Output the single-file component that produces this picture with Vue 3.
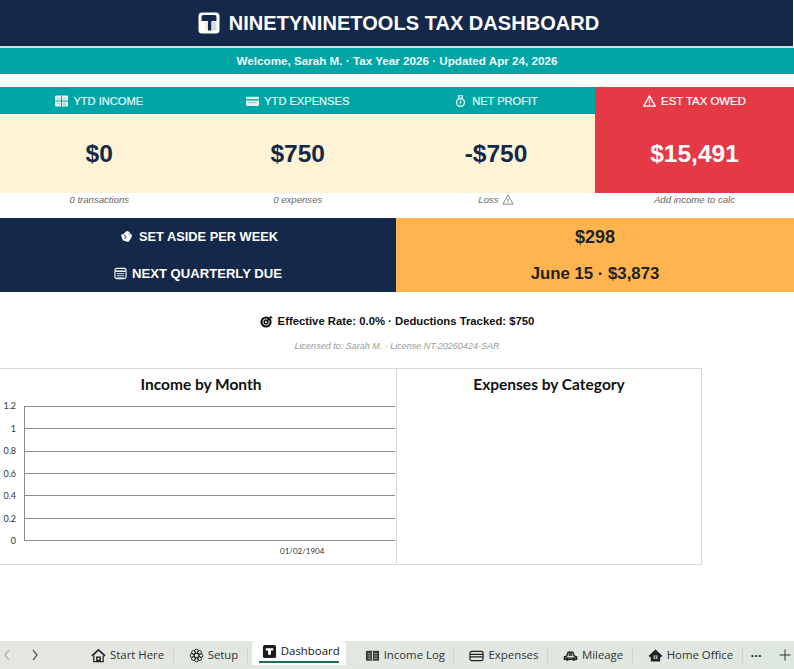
<script setup>
const kpis = [
  { label: 'YTD INCOME', value: '$0', note: '0 transactions', icon: 'income' },
  { label: 'YTD EXPENSES', value: '$750', note: '0 expenses', icon: 'card' },
  { label: 'NET PROFIT', value: '-$750', note: 'Loss', icon: 'bag', warn: true },
  { label: 'EST TAX OWED', value: '$15,491', note: 'Add income to calc', icon: 'alert', alert: true },
]
const ticks = ['1.2', '1', '0.8', '0.6', '0.4', '0.2', '0']
const lobes = [0, 45, 90, 135, 180, 225, 270, 315]
const tabs = [
  { name: 'Start Here', icon: 'home' },
  { name: 'Setup', icon: 'gear' },
  { name: 'Dashboard', icon: 'logo', active: true },
  { name: 'Income Log', icon: 'ledger' },
  { name: 'Expenses', icon: 'card' },
  { name: 'Mileage', icon: 'car' },
  { name: 'Home Office', icon: 'house2' },
]
</script>

<template>
  <div class="page">
    <header class="title-bar">
      <svg class="title-icon" viewBox="0 0 22 22">
        <rect x="0.5" y="0.5" width="21" height="21" rx="3.5" fill="#fff" />
        <path d="M3.5 5a2 2 0 0 1 2-2h11a2 2 0 0 1 2 2v4h-5v9.5h-3.5V9h-6.5z" fill="#14284a" />
        <rect x="7.5" y="9.5" width="2.5" height="9" fill="#f3e6cf" />
        <rect x="13.5" y="10" width="5" height="8.5" fill="#d5dce4" />
      </svg>
      <h1>NINETYNINETOOLS TAX DASHBOARD</h1>
    </header>
    <div class="welcome">Welcome, Sarah M. · Tax Year 2026 · Updated Apr 24, 2026</div>

    <section class="kpis">
      <div v-for="k in kpis" :key="k.label" class="kpi" :class="{ alert: k.alert }">
        <div class="kpi-head">
          <svg v-if="k.icon === 'income'" class="kpi-icon" viewBox="0 0 13 11">
            <rect width="13" height="11" rx="1" fill="#e4f5f4" />
            <path d="M6.5 0v11M0 5.500h13" stroke="#00a6a6" stroke-width="1" />
            <path d="M2 2.800h3M8 2.800h3M2 8.200h3M8 7.500h3M8 9.300h3" stroke="#7fcfcf" stroke-width="0.9" />
          </svg>
          <svg v-else-if="k.icon === 'card'" class="kpi-icon" viewBox="0 0 14 11">
            <rect y="1" width="14" height="10" rx="1.5" fill="#e4f5f4" />
            <rect y="3.5" width="14" height="1.5" fill="#00a6a6" />
            <rect x="2" y="6.8" width="10" height="1" fill="#7fcfcf" />
          </svg>
          <svg v-else-if="k.icon === 'bag'" class="kpi-icon" viewBox="0 0 14 14">
            <path d="M4.500 1h5L8.500 4h-3z" fill="none" stroke="#eaf6f6" stroke-width="1.2" />
            <circle cx="7" cy="8.7" r="4.6" fill="none" stroke="#eaf6f6" stroke-width="1.5" />
            <path d="M7 6v5M5.600 8.600h2.800" stroke="#eaf6f6" />
          </svg>
          <svg v-else class="kpi-icon" viewBox="0 0 14 13">
            <path d="M7 1l6.200 11H.8z" fill="none" stroke="#fff" stroke-width="1.5" stroke-linejoin="round" />
            <path d="M7 5v3.600M7 9.500v1.400" stroke="#fff" stroke-width="1.4" />
          </svg>
          <span>{{ k.label }}</span>
        </div>
        <div class="kpi-value">{{ k.value }}</div>
      </div>
      <div v-for="k in kpis" :key="k.note" class="kpi-note">
        {{ k.note }}
        <svg v-if="k.warn" class="note-icon" viewBox="0 0 14 13">
          <path d="M7 1l6 11H1z" fill="none" stroke="#777" />
          <path d="M7 5v4M7 10v1" stroke="#777" />
        </svg>
      </div>
    </section>

    <section class="plan">
      <div class="plan-left">
        <div class="plan-row">
          <svg class="plan-icon" viewBox="0 0 14 14">
            <path d="M1 5l3-1 3-3 3 1 1 2 2 1-1 4-3 4-3-1-3-1-1-3z" fill="#fff" />
            <path d="M4 5l3 2M4.500 8.500h2.500M9 4l1 1" stroke="#14284a" />
          </svg>
          <span>SET ASIDE PER WEEK</span>
        </div>
        <div class="plan-row wide">
          <svg class="plan-icon" viewBox="0 0 14 14">
            <rect x="1" y="1.5" width="12" height="11" rx="2" fill="none" stroke="#fff" stroke-width="1.2" />
            <path d="M1.500 4.500h11" stroke="#fff" stroke-width="1.6" />
            <path d="M3 7h8M3 9h8M3 11h8" stroke="#c8d0da" />
          </svg>
          <span>NEXT QUARTERLY DUE</span>
        </div>
      </div>
      <div class="plan-right">
        <div class="plan-value big">$298</div>
        <div class="plan-value">June 15 · $3,873</div>
      </div>
    </section>

    <p class="rate">
      <svg class="rate-icon" viewBox="0 0 14 14">
        <circle cx="6.5" cy="7.5" r="6" fill="#111" />
        <circle cx="6.5" cy="7.5" r="3.4" fill="none" stroke="#eee" />
        <circle cx="6.5" cy="7.5" r="1.2" fill="#eee" />
        <path d="M7 7l5-5" stroke="#111" stroke-width="1.5" />
        <path d="M11 0.500v3h3z" fill="#111" />
      </svg>
      <span>Effective Rate: 0.0% · Deductions Tracked: $750</span>
    </p>
    <p class="license">Licensed to: Sarah M. · License NT-20260424-SAR</p>

    <section class="charts">
      <div class="chart chart-income">
        <h2>Income by Month</h2>
        <div class="plot">
          <div class="y-axis">
            <span v-for="t in ticks" :key="t">{{ t }}</span>
          </div>
          <div class="grid-area">
            <i v-for="n in 6" :key="n" class="grid-row"></i>
          </div>
        </div>
        <div class="x-label">01/02/1904</div>
      </div>
      <div class="chart chart-expense">
        <h2>Expenses by Category</h2>
      </div>
    </section>

    <nav class="tabs">
      <span class="arrows">
        <svg class="arrow" viewBox="0 0 8 12"><path d="M6 1L2 6l4 5" fill="none" stroke="#a4a9a4" stroke-width="1.2" /></svg>
        <svg class="arrow" viewBox="0 0 8 12"><path d="M2 1l4 5-4 5" fill="none" stroke="#3d403d" stroke-width="1.2" /></svg>
      </span>
      <div v-for="t in tabs" :key="t.name" class="tab" :class="{ active: t.active }">
        <svg class="tab-icon" viewBox="0 0 16 16">
          <template v-if="t.icon === 'home'">
            <path d="M1 8.500L8 2l7 6.500" fill="none" stroke="#222" stroke-width="1.8" />
            <path d="M3 8v6.500h10V8" fill="none" stroke="#222" stroke-width="1.3" />
            <path d="M5.500 14.500V9h5v5.500z" fill="#222" />
            <rect x="7" y="10.500" width="2" height="2" fill="#e3e8e2" />
          </template>
          <template v-else-if="t.icon === 'gear'">
            <circle v-for="a in lobes" :key="a" cx="8" cy="3.4" r="2.1" fill="none" stroke="#222" stroke-width="1" :transform="`rotate(${a} 8 8)`" />
            <circle cx="8" cy="8" r="2.4" fill="#e3e8e2" stroke="#222" stroke-width="1.1" />
          </template>
          <template v-else-if="t.icon === 'logo'">
            <rect x="1" y="1" width="14" height="14" rx="2" fill="#1c1c1c" />
            <path d="M4 4.500h8v2.500h-2.500v4.500H6.500V7H4z" fill="#fff" />
          </template>
          <template v-else-if="t.icon === 'ledger'">
            <rect x="1" y="3" width="14" height="10.5" fill="#3a3a3a" />
            <path d="M8 3v10.500" stroke="#e3e8e2" />
            <path d="M3 6h3.500M3 8.500h3.500M3 11h3.500M9.500 6h3.500M9.500 8.500h3.500M9.500 11h3.500" stroke="#a5a9a5" />
          </template>
          <template v-else-if="t.icon === 'card'">
            <rect x="1" y="3.5" width="14" height="10" rx="2" fill="none" stroke="#222" stroke-width="1.3" />
            <path d="M1 6.800h14M1 9.500h14" stroke="#222" stroke-width="1.3" />
          </template>
          <template v-else-if="t.icon === 'car'">
            <path d="M1.500 12V9.500L4 8.500l1.500-4h5l1.500 4 2.500 1V12z" fill="none" stroke="#222" stroke-width="1.5" />
            <rect x="6" y="5.500" width="4" height="3" fill="#444" />
            <path d="M2 10.500h12" stroke="#222" />
            <circle cx="4.500" cy="12" r="1.7" fill="#222" />
            <circle cx="11.500" cy="12" r="1.7" fill="#222" />
          </template>
          <template v-else>
            <path d="M0.500 8.500L8 1.500l7.500 7-2.500 1.500v4.500H3V10z" fill="#222" />
            <rect x="6" y="8" width="4" height="3.5" fill="#e3e8e2" />
            <path d="M8 8v3.500M6 9.700h4" stroke="#222" stroke-width="0.7" />
          </template>
        </svg>
        <span>{{ t.name }}</span>
      </div>
      <span class="more">···</span>
      <svg class="plus" viewBox="0 0 12 12"><path d="M6 .5v11M.5 6h11" stroke="#333" stroke-width="1" /></svg>
    </nav>
  </div>
</template>

<style scoped>
.page {
  width: 794px;
  height: 669px;
  display: flex;
  flex-direction: column;
  overflow: hidden;
  background: #fff;
  font-family: "Liberation Sans", Arial, sans-serif;
}
.title-bar {
  height: 46px;
  padding-left: 4px;
  background: #14284a;
  border-bottom: 2px solid #cfe1dc;
  border-right: 1px solid #fff;
  display: flex;
  align-items: center;
  justify-content: center;
  gap: 9px;
  color: #fff;
}
.title-icon { width: 22px; height: 22px; }
h1 {
  margin: 0;
  font-size: 20px;
  font-weight: 700;
  letter-spacing: 0.04px;
}
.welcome {
  height: 26px;
  line-height: 26px;
  background: #00a6a6;
  color: #eef9f9;
  text-align: center;
  font-size: 11.67px;
  font-weight: 700;
}
.kpis {
  margin-top: 13px;
  display: grid;
  grid-template-columns: 198.5px 198.5px 198px 199px;
}
.kpi-head {
  height: 27px;
  background: #00a6a6;
  color: #e6f6f6;
  display: flex;
  align-items: center;
  justify-content: center;
  gap: 5px;
  font-size: 11.1px;
  -webkit-text-stroke: 0.2px currentColor;
}
.kpi-icon { width: 13px; height: 12px; }
.kpi-value {
  height: 79px;
  background: #fff3d6;
  color: #14284a;
  display: flex;
  align-items: center;
  justify-content: center;
  font-size: 24.5px;
  font-weight: 700;
}
.alert .kpi-head,
.alert .kpi-value {
  background: #e63946;
  color: #fff;
}
.alert .kpi-head { font-size: 11.4px; }
.kpi-note {
  height: 25px;
  padding-bottom: 13px;
  box-sizing: border-box;
  display: flex;
  align-items: center;
  justify-content: center;
  gap: 3px;
  color: #666;
  font-size: 9.6px;
  font-style: italic;
}
.note-icon { width: 12px; height: 11px; }
.plan {
  display: grid;
  grid-template-columns: 396px 398px;
  height: 74px;
}
.plan-left {
  background: #14284a;
  color: #fff;
  display: grid;
  grid-template-rows: 1fr 1fr;
}
.plan-row {
  display: flex;
  align-items: center;
  justify-content: center;
  gap: 6px;
  padding-left: 2px;
  font-size: 12.8px;
  font-weight: 700;
}
.plan-row.wide {
  gap: 5px;
  padding: 0 0 1px;
  font-size: 13.1px;
}
.plan-icon { width: 13px; height: 13px; }
.plan-right {
  background: #ffb44f;
  display: grid;
  grid-template-rows: 1fr 1fr;
}
.plan-value {
  display: flex;
  align-items: center;
  justify-content: center;
  color: #222;
  font-size: 16.8px;
  font-weight: 700;
}
.plan-value.big { font-size: 18px; padding-top: 1px; }
.rate {
  margin: 21px 0 0;
  height: 16px;
  display: flex;
  align-items: center;
  justify-content: center;
  gap: 5px;
  color: #111;
  font-size: 11.3px;
  font-weight: 700;
}
.rate-icon { width: 13px; height: 13px; }
.license {
  margin: 10px 0 0;
  height: 14px;
  line-height: 14px;
  text-align: center;
  color: #999;
  font-size: 9px;
  font-style: italic;
}
.charts {
  margin-top: 15px;
  display: flex;
  height: 197px;
  font-family: "Lato", "Open Sans", sans-serif;
}
.chart {
  box-sizing: border-box;
  border: 1px solid #d9d9d9;
  background: #fff;
}
.chart-income {
  width: 398px;
  margin-left: -1px;
  display: flex;
  flex-direction: column;
}
.chart-expense {
  width: 305px;
  border-left: 0;
}
h2 {
  margin: 0;
  padding-top: 6px;
  height: 30px;
  box-sizing: content-box;
  text-align: center;
  font-size: 15.5px;
  font-weight: 700;
  color: #111;
}
.chart-income h2 { padding-left: 6px; }
.plot {
  display: flex;
  height: 135px;
  margin: 1px 1px 0 0;
}
.y-axis {
  width: 24px;
  flex: none;
  display: flex;
  flex-direction: column;
  justify-content: space-between;
  align-items: flex-end;
  padding-right: 8px;
  box-sizing: border-box;
  margin: -6px 0;
  height: 147px;
  font-size: 9px;
  line-height: 12px;
  color: #333;
}
.grid-area {
  flex: 1;
  display: grid;
  grid-template-rows: repeat(6, 1fr);
  border-left: 1px solid #8c8c8c;
  border-bottom: 1px solid #8c8c8c;
}
.grid-row { border-top: 1px solid #8c8c8c; }
.x-label {
  margin-top: 5px;
  padding-left: 280px;
  font-size: 8px;
  color: #333;
}
.tabs {
  margin-top: auto;
  height: 28px;
  background: linear-gradient(90deg, #e4e6e1, #dfe8e0);
  display: flex;
  align-items: center;
  color: #333;
  font-family: "Open Sans", "Noto Sans", sans-serif;
  font-size: 11.4px;
}
.arrows {
  width: 76px;
  flex: none;
  display: flex;
  gap: 20px;
  padding-left: 3px;
  box-sizing: border-box;
}
.arrow { width: 8px; height: 12px; }
.tab {
  display: flex;
  align-items: center;
  gap: 4px;
  height: 16px;
  padding: 0 8.5px 0 15px;
  border-right: 1px solid #ced3cd;
}
.tab span { margin-top: -1px; }
.tab-icon { width: 15px; height: 15px; flex: none; }
.tab.active {
  background: #fff;
  align-self: flex-start;
  height: 24px;
  padding: 0 6px 4px 10px;
  margin: 0 4px;
  box-sizing: border-box;
  border: 0;
  border-radius: 4px 4px 0 0;
  color: #111;
  position: relative;
}
.tab.active::after {
  content: "";
  position: absolute;
  left: 7px;
  right: 7px;
  bottom: 2px;
  height: 2px;
  background: #1e6e50;
}
.more {
  margin-left: 8px;
  font-weight: 700;
  font-size: 13px;
}
.plus {
  margin-left: auto;
  margin-right: 3px;
  width: 12px;
  height: 12px;
}
</style>
